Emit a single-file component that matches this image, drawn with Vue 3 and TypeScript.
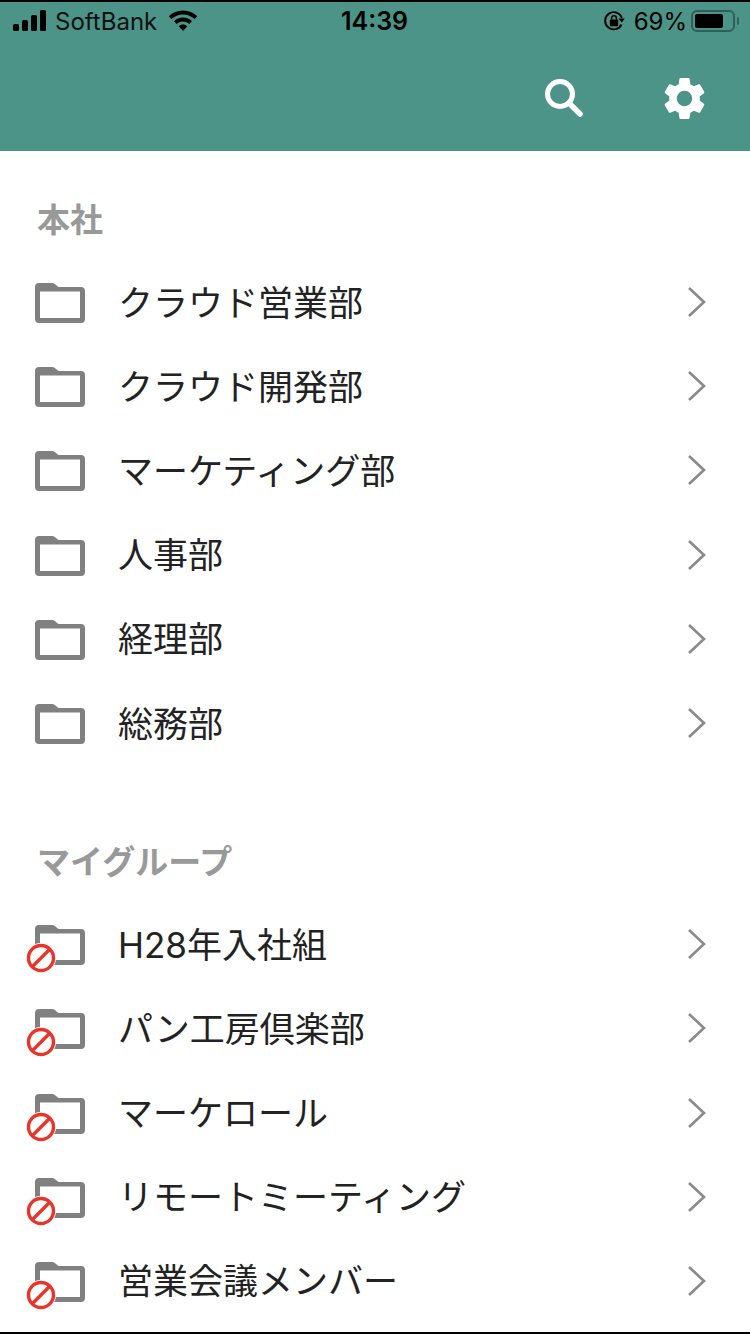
<template>
  <div class="screen">
    <header class="app-header">
      <div class="status-bar">
        <div class="status-left">
          <svg class="signal" width="34" height="22" viewBox="0 0 34 22" aria-hidden="true">
            <rect x="0" y="14" width="6" height="7" rx="1.5" />
            <rect x="9" y="10" width="6" height="11" rx="1.5" />
            <rect x="18" y="5" width="6" height="16" rx="1.5" />
            <rect x="27" y="0" width="6" height="21" rx="1.5" />
          </svg>
          <span class="carrier">SoftBank</span>
          <svg class="wifi" width="30" height="22" viewBox="0 0 30 22" aria-hidden="true">
            <path d="M15 0.5C9.4 0.5 4.4 2.7 0.8 6.3L3.4 9.1C6.4 6.2 10.5 4.4 15 4.4s8.6 1.8 11.6 4.7l2.6-2.8C25.6 2.7 20.6 0.5 15 0.5z" />
            <path d="M15 7.6c-3.5 0-6.7 1.4-9 3.6l2.7 2.8c1.6-1.6 3.8-2.5 6.3-2.5s4.7.9 6.3 2.5l2.7-2.8c-2.3-2.2-5.5-3.6-9-3.6z" />
            <path d="M15 14.6c-1.7 0-3.2.7-4.3 1.7L15 21l4.3-4.7c-1.1-1-2.6-1.7-4.3-1.7z" />
          </svg>
        </div>
        <div class="clock">14:39</div>
        <div class="status-right">
          <svg class="lock" width="22" height="22" viewBox="0 0 22 22" aria-hidden="true">
            <path d="M18.5 14.5A8.6 8.6 0 1 1 18.9 8" fill="none" stroke="#000" stroke-width="1.9" />
            <path d="M15.6 8.6h6.2l-3.1 4z" fill="#000" />
            <rect x="6.8" y="9.6" width="8.4" height="6.6" rx="1" fill="#000" />
            <path d="M8.6 9.8V8.2a2.4 2.4 0 0 1 4.8 0v1.6" fill="none" stroke="#000" stroke-width="1.5" />
          </svg>
          <span class="battery-pct">69%</span>
          <div class="battery">
            <div class="battery-body">
              <div class="battery-fill" :style="{ width: '69%' }"></div>
            </div>
            <div class="battery-cap"></div>
          </div>
        </div>
      </div>
      <div class="toolbar">
        <button class="tool-btn search-btn" aria-label="検索">
          <svg width="40" height="40" viewBox="0 0 40 40" aria-hidden="true">
            <circle cx="16" cy="16" r="12.5" fill="none" stroke="#fff" stroke-width="5" />
            <path d="M25 25L36 36" fill="none" stroke="#fff" stroke-width="5.6" stroke-linecap="round" />
          </svg>
        </button>
        <button class="tool-btn gear-btn" aria-label="設定">
          <svg width="51" height="51" viewBox="0 0 24 24" aria-hidden="true">
            <path
              fill="#fff"
              d="M19.14 12.94c.04-.3.06-.61.06-.94 0-.32-.02-.64-.07-.94l2.03-1.58c.18-.14.23-.41.12-.61l-1.92-3.32c-.12-.22-.37-.29-.59-.22l-2.39.96c-.5-.38-1.03-.7-1.62-.94l-.36-2.54c-.04-.24-.24-.41-.48-.41h-3.84c-.24 0-.43.17-.47.41l-.36 2.54c-.59.24-1.13.57-1.62.94l-2.39-.96c-.22-.08-.47 0-.59.22L2.74 8.87c-.12.21-.08.47.12.61l2.03 1.58c-.05.3-.09.63-.09.94s.02.64.07.94l-2.03 1.58c-.18.14-.23.41-.12.61l1.92 3.32c.12.22.37.29.59.22l2.39-.96c.5.38 1.03.7 1.62.94l.36 2.54c.05.24.24.41.48.41h3.84c.24 0 .44-.17.47-.41l.36-2.54c.59-.24 1.13-.56 1.62-.94l2.39.96c.22.08.47 0 .59-.22l1.92-3.32c.12-.22.07-.47-.12-.61l-2.01-1.58zM12 15.6c-1.98 0-3.6-1.62-3.6-3.6s1.62-3.6 3.6-3.6 3.6 1.62 3.6 3.6-1.62 3.6-3.6 3.6z"
            />
          </svg>
        </button>
      </div>
    </header>

    <section v-for="section in sections" :key="section.title" class="section">
      <h2 class="section-title">{{ section.title }}</h2>
      <ul class="rows">
        <li v-for="name in section.rows" :key="name" class="row">
          <div class="folder" :class="{ blocked: section.blocked }">
            <svg width="52" height="42" viewBox="0 0 52 42" aria-hidden="true">
              <path
                d="M5 1h13c1.500 0 2.500.6 3.400 1.600L24.500 5H47c2.500 0 4 1.500 4 4v28c0 2.500-1.500 4-4 4H5c-2.500 0-4-1.500-4-4V5c0-2.500 1.500-4 4-4zM6 9.500V36h40V9.500z"
                fill="#808080"
                fill-rule="evenodd"
              />
            </svg>
            <svg v-if="section.blocked" class="no-entry" width="30" height="30" viewBox="0 0 30 30" aria-hidden="true">
              <circle cx="15" cy="15" r="15" fill="#fff" />
              <circle cx="15" cy="15" r="12.500" fill="none" stroke="#e8352b" stroke-width="3.400" />
              <path d="M6.500 23.500L23.500 6.500" stroke="#e8352b" stroke-width="3.400" />
            </svg>
          </div>
          <span class="row-name">{{ name }}</span>
          <svg class="chevron" width="20" height="32" viewBox="0 0 20 32" aria-hidden="true">
            <path d="M2 2L17 16L2 30" fill="none" stroke="#8a8a8a" stroke-width="2.600" />
          </svg>
        </li>
      </ul>
    </section>
  </div>
</template>

<script setup lang="ts">
interface Section {
  title: string
  blocked: boolean
  rows: string[]
}

const sections: Section[] = [
  {
    title: '本社',
    blocked: false,
    rows: ['クラウド営業部', 'クラウド開発部', 'マーケティング部', '人事部', '経理部', '総務部'],
  },
  {
    title: 'マイグループ',
    blocked: true,
    rows: ['H28年入社組', 'パン工房倶楽部', 'マーケロール', 'リモートミーティング', '営業会議メンバー'],
  },
]
</script>

<style>
html,
body {
  background: #fff;
}
</style>

<style scoped>
.screen {
  width: 750px;
  height: 1334px;
  overflow: hidden;
  background: #fff;
  border-bottom: 2px solid #000;
  box-sizing: border-box;
  font-family: 'Noto Sans CJK JP', sans-serif;
}

.app-header {
  height: 151px;
  background: #4c9488;
  border-top: 2px solid #000;
  box-sizing: border-box;
}

.status-bar {
  height: 38px;
  display: flex;
  align-items: center;
  justify-content: space-between;
  padding: 0 13px;
  color: #000;
  font-family: 'Inter', 'Liberation Sans', sans-serif;
  position: relative;
}

.status-left,
.status-right {
  display: flex;
  align-items: center;
}

.signal {
  fill: #000;
  margin-right: 8px;
}

.carrier {
  font-size: 24px;
  margin-right: 11px;
  color: #111;
}

.wifi {
  fill: #000;
}

.clock {
  position: absolute;
  left: 341px;
  font-size: 25px;
  font-weight: 600;
}

.status-right {
  margin-left: auto;
  padding-right: 0;
  transform: translateX(2px);
}

.lock {
  margin-right: 9px;
}

.battery-pct {
  font-size: 24px;
  margin-right: 4px;
}

.battery {
  display: flex;
  align-items: center;
}

.battery-body {
  width: 44px;
  height: 22px;
  border: 2px solid #2f5f58;
  border-radius: 6px;
  padding: 2px;
  box-sizing: border-box;
}

.battery-fill {
  height: 100%;
  min-width: 28px;
  background: #000;
  border-radius: 2px;
}

.battery-cap {
  width: 2px;
  height: 8px;
  margin-left: 2px;
  background: #2f5f58;
  border-radius: 0 2px 2px 0;
}

.toolbar {
  height: 111px;
  display: flex;
  justify-content: flex-end;
  padding: 0 40px 0 0;
}

.tool-btn {
  padding: 0;
  border: none;
  background: none;
  display: flex;
  height: 100%;
  align-items: flex-start;
}

.search-btn {
  margin-right: 75px;
  padding-top: 38px;
}

.gear-btn {
  padding-top: 33px;
}

.section + .section {
  margin-top: 27px;
}

.section-title {
  margin: 0;
  padding: 47px 0 23px 37px;
  font-size: 33px;
  line-height: 40px;
  font-weight: 700;
  color: #999;
}

.rows {
  list-style: none;
  margin: 0;
  padding: 0;
}

.row {
  height: 84.200px;
  display: flex;
  align-items: center;
  padding: 0 43px 0 34px;
}

.folder {
  position: relative;
  width: 52px;
  height: 42px;
  margin-right: 32px;
  flex-shrink: 0;
}

.folder svg {
  display: block;
}

.no-entry {
  position: absolute;
  left: -8px;
  top: 19px;
}

.row-name {
  flex: 1;
  font-family: 'Inter', 'Noto Sans CJK JP', sans-serif;
  font-size: 35px;
  line-height: 44px;
  padding-bottom: 1px;
  color: #222;
}

.chevron {
  margin-top: -2px;
}
</style>
